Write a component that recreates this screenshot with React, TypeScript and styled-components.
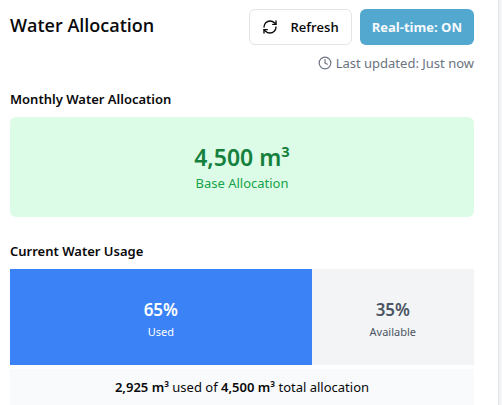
import React from "react";
import styled, { createGlobalStyle } from "styled-components";
import { Clock, RefreshCw } from "lucide-react";

const GlobalStyle = createGlobalStyle`
  *, *::before, *::after { box-sizing: border-box; }
  body {
    margin: 0;
    background: #f3f4f6;
    color: #09090b;
    font-family: "Noto Sans", "Open Sans", sans-serif;
    font-size: 13px;
    line-height: 20px;
    overflow: hidden;
  }
  h2, h3, p { margin: 0; }
`;

const Card = styled.main`
  min-height: 100vh;
  margin-right: 4px;
  padding: 9px 24px 0 10px;
  background: #ffffff;
  box-shadow: 1px 0 1px #e4e4e7;
`;

const Header = styled.header`
  display: flex;
  justify-content: space-between;
  align-items: flex-start;
`;

const Title = styled.h2`
  font-family: "Open Sans", "Noto Sans", sans-serif;
  font-size: 18px;
  font-weight: 600;
  line-height: 32px;
`;

const Controls = styled.div`
  display: flex;
  flex-direction: column;
  align-items: flex-end;
  gap: 8px;
`;

const Buttons = styled.div`
  display: flex;
  gap: 8px;
`;

const Button = styled.button<{ $active?: boolean }>`
  display: inline-flex;
  align-items: center;
  gap: 12px;
  height: 36px;
  padding: 0 12px;
  border: ${(p) => (p.$active ? "0" : "1px solid #e4e4e7")};
  border-radius: 6px;
  background: ${(p) => (p.$active ? "#53a8d0" : "#ffffff")};
  color: ${(p) => (p.$active ? "#f8fafc" : "#09090b")};
  font: inherit;
  font-family: "Open Sans", "Noto Sans", sans-serif;
  font-weight: ${(p) => (p.$active ? 700 : 600)};
  white-space: nowrap;
`;

const Updated = styled.p`
  display: flex;
  align-items: center;
  gap: 4px;
  color: #6b7280;
`;

const Section = styled.section<{ $first?: boolean }>`
  margin-top: ${(p) => (p.$first ? "16px" : "24px")};
`;

const SectionTitle = styled.h3`
  font-size: 13px;
  font-weight: 600;
  line-height: 20px;
  margin-bottom: 8px;
`;

const BasePanel = styled.div`
  display: flex;
  flex-direction: column;
  align-items: center;
  padding: 24px 16px;
  border-radius: 6px;
  background: #dcfce7;
  color: #16a34a;
`;

const BaseValue = styled.strong`
  font-size: 23px;
  font-weight: 600;
  line-height: 32px;
  color: #15803d;
`;

const UsageBar = styled.div`
  display: flex;
  height: 96px;
`;

const Segment = styled.div<{ $used?: boolean }>`
  display: flex;
  flex-direction: column;
  align-items: center;
  justify-content: center;
  padding-top: 2px;
  background: ${(p) => (p.$used ? "#3b82f6" : "#f3f4f6")};
  color: ${(p) => (p.$used ? "#ffffff" : "#4b5563")};
`;

const Percent = styled.strong`
  font-size: 17px;
  font-weight: 600;
  line-height: 28px;
`;

const Caption = styled.span`
  font-size: 11px;
  line-height: 16px;
`;

const Summary = styled.p`
  margin-top: 4px;
  padding: 8px;
  background: #f8fafc;
  text-align: center;
`;

const Amount = styled.span`
  font-weight: 600;
`;

const usedPercent = 65;

export default function App() {
  return (
    <>
      <GlobalStyle />
      <Card>
        <Header>
          <Title>Water Allocation</Title>
          <Controls>
            <Buttons>
              <Button type="button">
                <RefreshCw size={16} aria-hidden />
                Refresh
              </Button>
              <Button type="button" $active aria-pressed="true">
                Real-time: ON
              </Button>
            </Buttons>
            <Updated>
              <Clock size={14} aria-hidden />
              Last updated: Just now
            </Updated>
          </Controls>
        </Header>

        <Section $first>
          <SectionTitle>Monthly Water Allocation</SectionTitle>
          <BasePanel>
            <BaseValue>4,500 m³</BaseValue>
            <span>Base Allocation</span>
          </BasePanel>
        </Section>

        <Section>
          <SectionTitle>Current Water Usage</SectionTitle>
          <UsageBar>
            <Segment $used style={{ width: `${usedPercent}%` }}>
              <Percent>{usedPercent}%</Percent>
              <Caption>Used</Caption>
            </Segment>
            <Segment style={{ width: `${100 - usedPercent}%` }}>
              <Percent>{100 - usedPercent}%</Percent>
              <Caption>Available</Caption>
            </Segment>
          </UsageBar>
          <Summary>
            <Amount>2,925 m³</Amount> used of <Amount>4,500 m³</Amount> total allocation
          </Summary>
        </Section>
      </Card>
    </>
  );
}
